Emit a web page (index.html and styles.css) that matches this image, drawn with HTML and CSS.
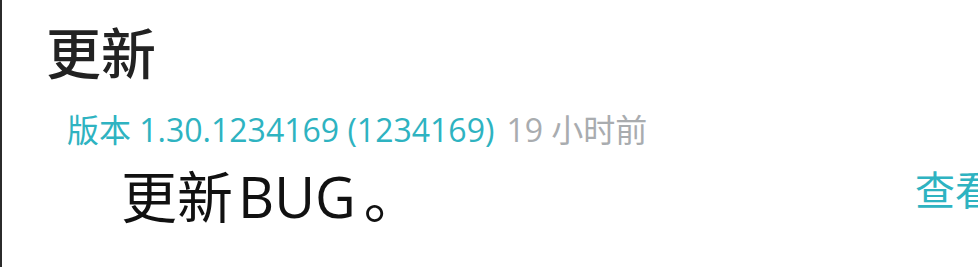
FILE: index.html
```html
<!DOCTYPE html>
<html lang="zh-CN">
<head>
<meta charset="utf-8">
<link rel="stylesheet" href="styles.css">
</head>
<body>
<div class="card">
  <h1 class="title">更新</h1>
  <div class="meta">
    <span class="version">版本 1.30.1234169 (1234169)</span>
    <span class="time">19 小时前</span>
  </div>
  <div class="entry">
    <p class="note">更新<span class="en">BUG</span>。</p>
    <a class="view">查看</a>
  </div>
</div>
</body>
</html>
```
FILE: styles.css
```css
html, body {
  margin: 0;
  padding: 0;
  background: #ffffff;
  overflow: hidden;
}
body {
  width: 978px;
  height: 267px;
  font-family: "Noto Sans CJK SC", "Noto Sans", sans-serif;
}
.card {
  box-sizing: border-box;
  width: 1020px;
  height: 267px;
  border-left: 2px solid #2b2b2b;
  padding-left: 44px;
  padding-top: 18px;
}
.title {
  margin: 0;
  font-size: 55px;
  line-height: 64px;
  font-weight: 500;
  color: #222222;
}
.meta {
  margin-top: 28px;
  padding-left: 21px;
  font-family: "Open Sans", "Noto Sans CJK SC", sans-serif;
  font-size: 32px;
  line-height: 40px;
  display: flex;
  gap: 12px;
}
.version {
  color: #2eb3c1;
}
.time {
  color: #a9acaf;
}
.entry {
  margin-top: 11px;
  padding-left: 75px;
  display: flex;
  justify-content: space-between;
  align-items: center;
}
.note {
  margin: 0;
  font-family: "Open Sans", "Noto Sans CJK SC", sans-serif;
  font-size: 56px;
  line-height: 70px;
  color: #111111;
}
.en {
  padding: 0 8px 0 5px;
}
.view {
  margin-top: -16px;
  font-size: 40px;
  line-height: 50px;
  color: #2eb3c1;
  margin-right: 25px;
}
```
